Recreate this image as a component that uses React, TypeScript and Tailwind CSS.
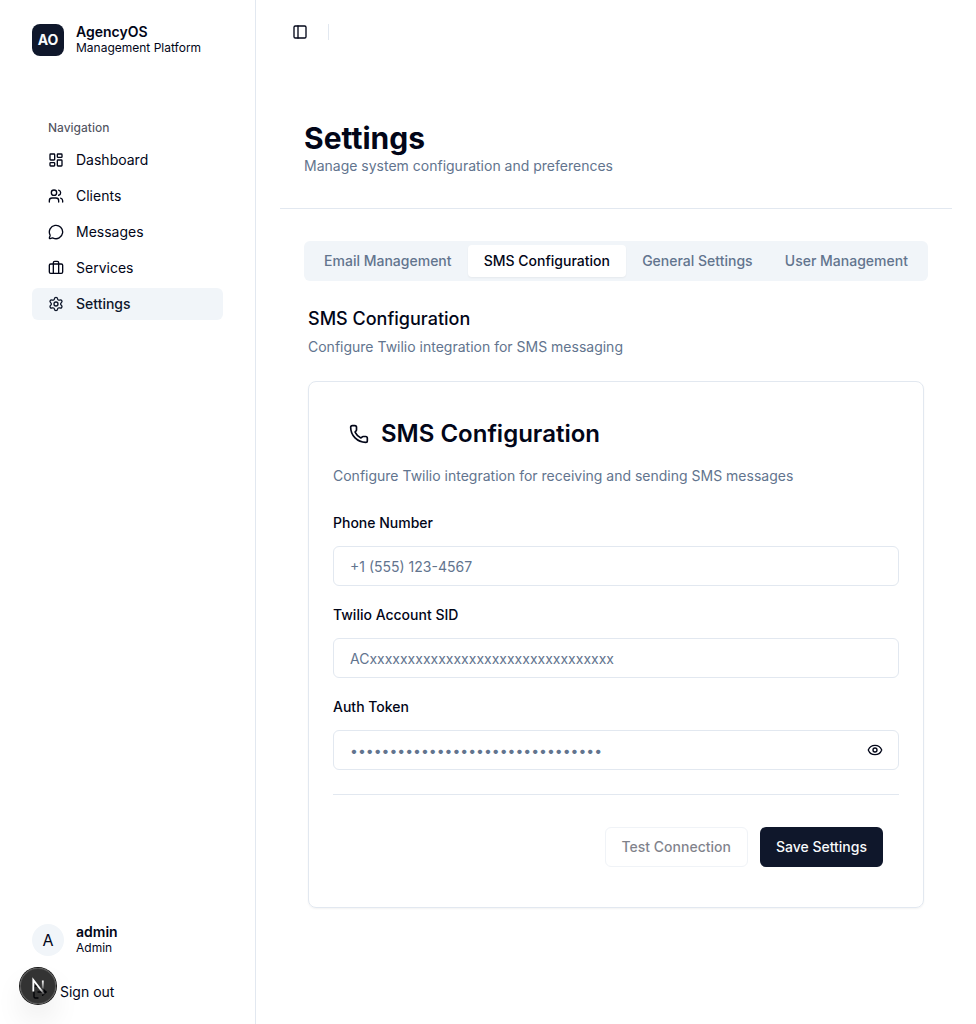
import React, { useState } from "react";
import {
  Eye,
  LayoutDashboard,
  LogOut,
  MessageCircle,
  PanelLeft,
  Phone,
  Settings,
  Users,
} from "lucide-react";

function ServicesIcon({ className }: { className?: string }) {
  return (
    <svg
      className={className}
      viewBox="0 0 24 24"
      fill="none"
      stroke="currentColor"
      strokeWidth="2"
      strokeLinecap="round"
      strokeLinejoin="round"
      aria-hidden="true"
    >
      <path d="M16 20V4a2 2 0 0 0-2-2h-4a2 2 0 0 0-2 2v16" />
      <rect width="20" height="14" x="2" y="6" rx="2" />
    </svg>
  );
}

const navItems: { label: string; icon: React.ComponentType<{ className?: string }> }[] = [
  { label: "Dashboard", icon: LayoutDashboard },
  { label: "Clients", icon: Users },
  { label: "Messages", icon: MessageCircle },
  { label: "Services", icon: ServicesIcon },
  { label: "Settings", icon: Settings },
];

const tabs = ["Email Management", "SMS Configuration", "General Settings", "User Management"];

function Sidebar() {
  return (
    <aside className="flex w-64 shrink-0 flex-col border-r border-slate-200">
      <div className="flex items-center gap-3 px-8 pt-6">
        <div className="flex size-8 items-center justify-center rounded-lg bg-slate-900 text-sm font-bold text-slate-50">
          AO
        </div>
        <div className="flex flex-col">
          <span className="text-sm leading-4 font-semibold">AgencyOS</span>
          <span className="text-xs leading-4">Management Platform</span>
        </div>
      </div>

      <nav aria-label="Main" className="mt-14 flex-1 px-8">
        <div className="flex h-8 items-center px-4 text-xs font-medium text-slate-950/70">Navigation</div>
        <ul className="flex flex-col gap-1">
          {navItems.map(({ label, icon: Icon }) => (
            <li key={label}>
              <a
                href="#"
                className={
                  label === "Settings"
                    ? "flex h-8 items-center gap-3 rounded-md bg-slate-100 px-4 text-sm font-medium text-slate-900"
                    : "flex h-8 items-center gap-3 rounded-md px-4 text-sm"
                }
              >
                <Icon className="size-4" />
                {label}
              </a>
            </li>
          ))}
        </ul>
      </nav>

      <div className="px-8 pb-4">
        <div className="flex items-center gap-3">
          <div className="flex size-8 items-center justify-center rounded-full bg-slate-100">A</div>
          <div className="flex flex-col">
            <span className="text-sm leading-4 font-semibold">admin</span>
            <span className="text-xs leading-4">Admin</span>
          </div>
        </div>
        <button type="button" className="mt-5 flex h-8 items-center gap-3 text-sm">
          <LogOut className="size-4" />
          Sign out
        </button>
      </div>
    </aside>
  );
}

function Field({
  id,
  label,
  placeholder,
  type = "text",
  children,
}: {
  id: string;
  label: string;
  placeholder: string;
  type?: string;
  children?: React.ReactNode;
}) {
  return (
    <div className="flex flex-col gap-[13px]">
      <label htmlFor={id} className="text-sm font-medium">
        {label}
      </label>
      <div className="relative">
        <input
          id={id}
          type={type}
          placeholder={placeholder}
          className="block h-10 w-full rounded-md border border-slate-200 px-4 text-sm placeholder:text-slate-500"
        />
        {children}
      </div>
    </div>
  );
}

function SmsCard() {
  const [showToken, setShowToken] = useState(false);
  return (
    <section className="rounded-lg border border-slate-200 p-6 shadow-xs">
      <h3 className="flex items-center gap-3 p-4 text-2xl leading-6 font-semibold">
        <Phone className="size-5" />
        SMS Configuration
      </h3>
      <p className="mt-1 text-sm text-slate-500">
        Configure Twilio integration for receiving and sending SMS messages
      </p>
      <form className="mt-[27px]" onSubmit={(e) => e.preventDefault()}>
        <div className="flex flex-col gap-[19px]">
          <Field id="phone" label="Phone Number" placeholder="+1 (555) 123-4567" />
          <Field id="sid" label="Twilio Account SID" placeholder="ACxxxxxxxxxxxxxxxxxxxxxxxxxxxxxxxx" />
          <Field
            id="token"
            label="Auth Token"
            type={showToken ? "text" : "password"}
            placeholder="••••••••••••••••••••••••••••••••"
          >
            <button
              type="button"
              aria-label="Show token"
              onClick={() => setShowToken(!showToken)}
              className="absolute inset-y-0 right-0 flex items-center px-4"
            >
              <Eye className="size-4" />
            </button>
          </Field>
        </div>
        <div className="mt-6 flex justify-end gap-3 border-t border-slate-200 px-4 pt-8 pb-4">
          <button
            type="button"
            disabled
            className="h-10 rounded-md border border-slate-200 px-4 text-sm font-medium opacity-50"
          >
            Test Connection
          </button>
          <button type="submit" className="h-10 rounded-md bg-slate-900 px-4 text-sm font-medium text-slate-50">
            Save Settings
          </button>
        </div>
      </form>
    </section>
  );
}

function DevBadge() {
  return (
    <button
      type="button"
      aria-label="Open developer tools"
      className="fixed bottom-5 left-5 size-9 rounded-full bg-black/80 shadow-[0_0_0_1px_#171717,inset_0_0_0_1px_rgba(255,255,255,0.14),0_16px_32px_-8px_rgba(0,0,0,0.24)]"
    >
      <svg viewBox="0 0 36 36" fill="none" className="size-9" aria-hidden="true">
        <defs>
          <linearGradient id="diag" x1="9" y1="9" x2="14" y2="16" gradientUnits="userSpaceOnUse">
            <stop stopColor="white" />
            <stop offset="1" stopColor="white" stopOpacity="0" />
          </linearGradient>
          <linearGradient id="stem" x1="11.8" y1="1.5" x2="11.8" y2="12" gradientUnits="userSpaceOnUse">
            <stop stopColor="white" />
            <stop offset="1" stopColor="white" stopOpacity="0" />
          </linearGradient>
        </defs>
        <g transform="translate(11 11)" strokeWidth="1.86">
          <path d="M13.3 15.2 L2.34 1 V12.6" stroke="url(#diag)" />
          <path d="M11.825 1.5 V13.1" stroke="url(#stem)" />
        </g>
      </svg>
    </button>
  );
}

export default function App() {
  const [active, setActive] = useState("SMS Configuration");
  return (
    <div className="flex min-h-screen bg-white font-['Inter',sans-serif] text-slate-950">
      <Sidebar />
      <div className="min-w-0 flex-1">
        <header className="flex h-16 items-center gap-5 px-9">
          <button type="button" aria-label="Toggle sidebar">
            <PanelLeft className="size-4" />
          </button>
          <div className="h-4 w-px bg-slate-200" />
        </header>
        <main className="p-6">
          <div className="border-b border-slate-200 px-6 py-8">
            <h1 className="text-3xl font-bold">Settings</h1>
            <p className="text-sm text-slate-500">Manage system configuration and preferences</p>
          </div>
          <div className="px-6 pt-8">
            <div role="tablist" className="flex h-10 rounded-md bg-slate-100 p-1">
              {tabs.map((tab) => (
                <button
                  key={tab}
                  type="button"
                  role="tab"
                  aria-selected={tab === active}
                  onClick={() => setActive(tab)}
                  className={
                    tab === active
                      ? "flex-auto rounded-sm bg-white px-3 text-sm font-medium whitespace-nowrap shadow-xs"
                      : "flex-auto rounded-sm px-3 text-sm font-medium whitespace-nowrap text-slate-500"
                  }
                >
                  {tab}
                </button>
              ))}
            </div>
            <div className="px-1 pt-6">
              <h2 className="text-lg font-medium">SMS Configuration</h2>
              <p className="mt-1 mb-6 text-sm text-slate-500">Configure Twilio integration for SMS messaging</p>
              <SmsCard />
            </div>
          </div>
        </main>
      </div>
      <DevBadge />
    </div>
  );
}
